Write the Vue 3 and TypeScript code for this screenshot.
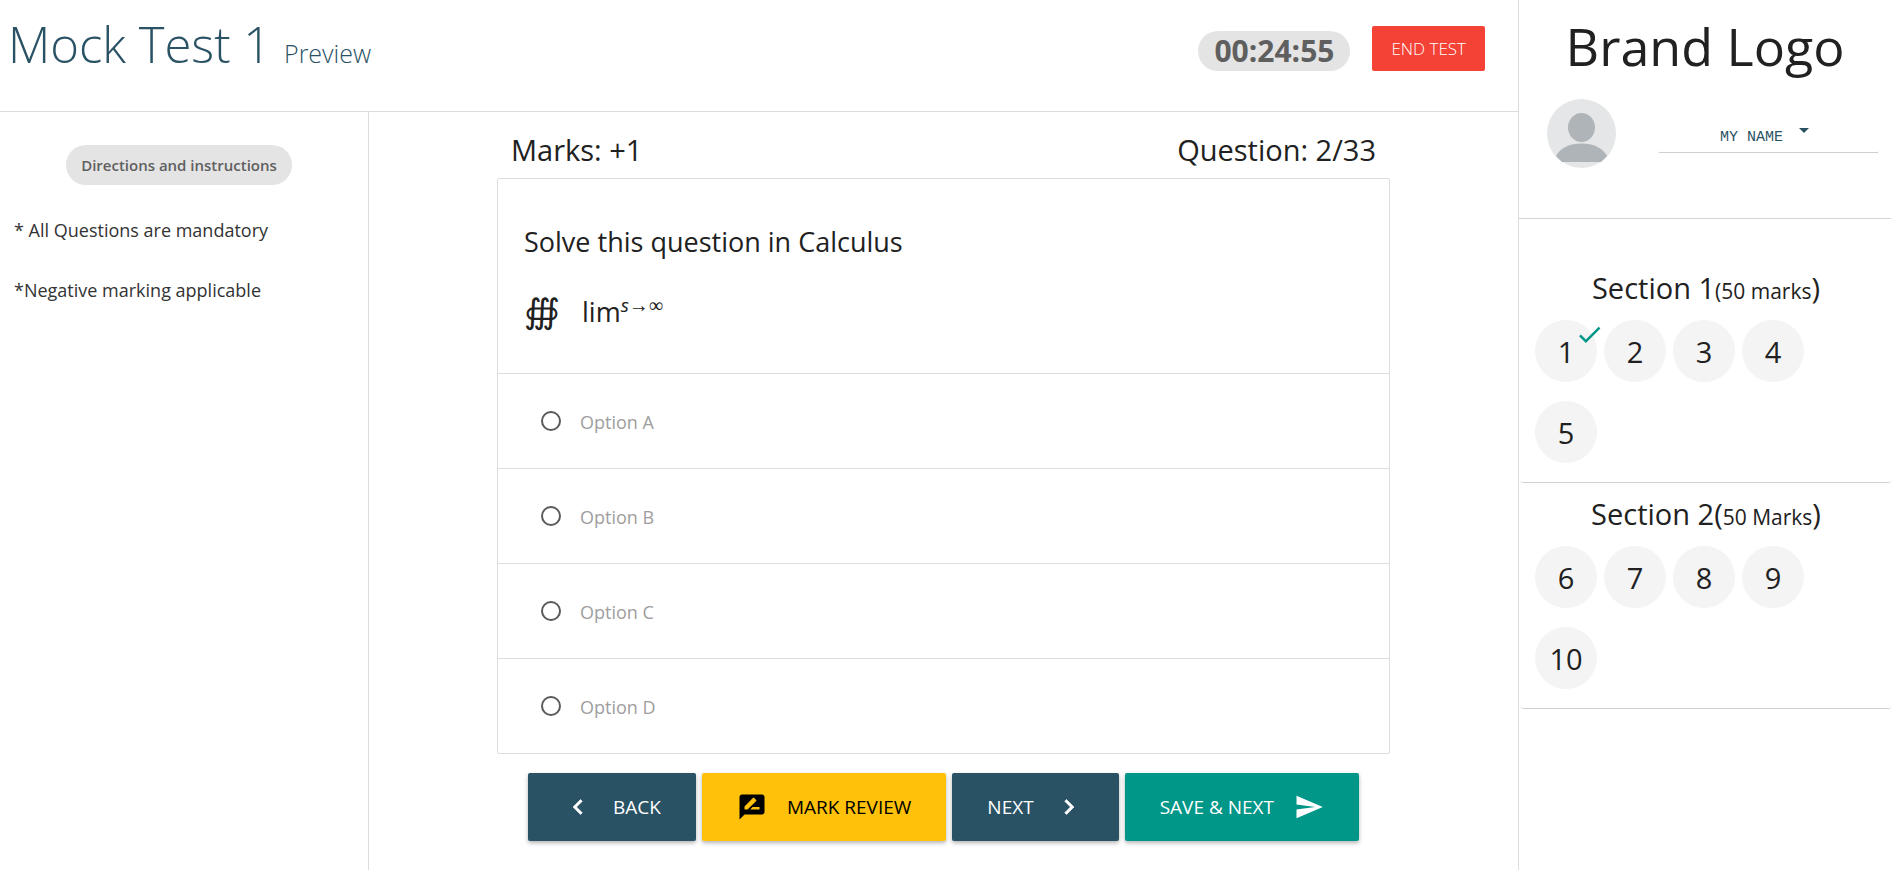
<script setup lang="ts">
import { ref } from 'vue'

interface Section {
  title: string
  note: string
  open: string
  items: number[]
}

const options: string[] = ['Option A', 'Option B', 'Option C', 'Option D']
const answer = ref<string>('')
const answered = ref<number[]>([1])
const directions: string[] = ['* All Questions are mandatory', '*Negative marking applicable']

const sections: Section[] = [
  { title: 'Section 1', open: '', note: '(50 marks', items: [1, 2, 3, 4, 5] },
  { title: 'Section 2', open: '(', note: '50 Marks', items: [6, 7, 8, 9, 10] },
]
</script>

<template>
  <div class="page">
    <div class="work">
      <header class="topbar">
        <h1 class="title">Mock Test 1 <small>Preview</small></h1>
        <div class="status">
          <span class="chip timer">00:24:55</span>
          <button type="button" class="end">END TEST</button>
        </div>
      </header>

      <div class="columns">
        <aside class="directions">
          <span class="chip heading">Directions and instructions</span>
          <p v-for="line in directions" :key="line">{{ line }}</p>
        </aside>

        <main class="question">
          <div class="meta">
            <span>Marks: +1</span>
            <span>Question: 2/33</span>
          </div>

          <div class="card">
            <div class="prompt">
              <p>Solve this question in Calculus</p>
              <p class="formula"><span class="integral">∰</span><span>lim<sup><i>s</i><span class="symbols">→∞</span></sup></span></p>
            </div>
            <label v-for="option in options" :key="option" class="option">
              <input v-model="answer" type="radio" name="answer" :value="option" />
              <span>{{ option }}</span>
            </label>
          </div>

          <div class="actions">
            <button type="button" class="navy">
              <svg class="chevron" viewBox="0 0 24 24" aria-hidden="true"><path d="M15.41 7.41 14 6l-6 6 6 6 1.41-1.41L10.83 12z" /></svg>
              <span>BACK</span>
            </button>
            <button type="button" class="amber">
              <svg viewBox="0 0 24 24" aria-hidden="true"><path d="M20 2H4c-1.1 0-1.99.9-1.99 2L2 22l4-4h14c1.1 0 2-.9 2-2V4c0-1.1-.9-2-2-2zM6 14v-2.47l6.88-6.88c.2-.2.51-.2.71 0l1.77 1.77c.2.2.2.51 0 .71L8.47 14H6zm12 0h-7.5l2-2H18v2z" /></svg>
              <span>MARK REVIEW</span>
            </button>
            <button type="button" class="navy">
              <span>NEXT</span>
              <svg class="chevron" viewBox="0 0 24 24" aria-hidden="true"><path d="M10 6 8.59 7.41 13.17 12l-4.58 4.59L10 18l6-6z" /></svg>
            </button>
            <button type="button" class="teal">
              <span>SAVE &amp; NEXT</span>
              <svg viewBox="0 0 24 24" aria-hidden="true"><path d="M2.01 21 23 12 2.01 3 2 10l15 2-15 2z" /></svg>
            </button>
          </div>
        </main>
      </div>
    </div>

    <aside class="sidebar">
      <div class="account">
        <div class="brand">Brand Logo</div>
        <div class="user">
          <svg class="avatar" viewBox="0 0 69 69" aria-hidden="true">
            <circle cx="34.5" cy="34.5" r="34.5" fill="#e4e6e7" />
            <ellipse cx="34.5" cy="28.5" rx="13.5" ry="14.5" fill="#aeb4b7" />
            <path d="M9 57C13 49 23 44.500 34.500 44.500S56 49 60 57L54 63H15z" fill="#aeb4b7" />
          </svg>
          <button type="button" class="menu">
            <span>MY NAME</span>
            <svg viewBox="0 0 10 5" aria-hidden="true"><path d="M0 0h10L5 5z" /></svg>
          </button>
        </div>
      </div>

      <section v-for="section in sections" :key="section.title" class="section">
        <h2>{{ section.title }}{{ section.open }}<small>{{ section.note }}</small>)</h2>
        <div class="numbers">
          <button v-for="n in section.items" :key="n" type="button">
            {{ n }}
            <svg v-if="answered.includes(n)" viewBox="0 0 24 24" aria-label="answered"><path d="M9 16.170 4.830 12l-1.420 1.410L9 19 21 7l-1.410-1.410z" /></svg>
          </button>
        </div>
      </section>
    </aside>
  </div>
</template>

<style>
body {
  margin: 0;
  background: #fff;
}
</style>

<style scoped>
.page {
  display: grid;
  grid-template-columns: minmax(0, 1fr) 373px;
  min-height: 100vh;
  box-sizing: border-box;
  font-family: "Segoe UI", "Open Sans", "Noto Sans", sans-serif;
  color: #212121;
}
.page *,
.page *::before {
  box-sizing: border-box;
}
h1, h2, p {
  margin: 0;
  font-weight: 400;
}
button {
  margin: 0;
  padding: 0;
  border: 0;
  background: none;
  font-family: inherit;
  color: inherit;
  cursor: pointer;
}
svg {
  fill: currentColor;
}
.work {
  display: flex;
  flex-direction: column;
}
.topbar {
  display: flex;
  justify-content: space-between;
  align-items: flex-start;
  min-height: 112px;
  padding: 0 33px 0 8px;
  border-bottom: 1px solid #dcdcdc;
}
.title {
  padding-top: 9px;
  font-size: 49px;
  line-height: 70px;
  font-weight: 300;
  color: #2a5265;
}
.title small {
  font-size: 25px;
}
.status {
  display: flex;
  align-items: flex-end;
  gap: 22px;
  padding-top: 26px;
}
.chip {
  padding: 0 15px;
  border-radius: 20px;
  background: #e4e4e4;
  line-height: 40px;
  color: #5f5f5f;
}
.timer {
  padding: 0 16px;
  font-size: 30px;
  font-weight: 700;
}
.end {
  padding: 0 19px;
  border-radius: 2px;
  background: #f44336;
  color: #fff;
  font-size: 17px;
  line-height: 45px;
  font-weight: 300;
}
.columns {
  display: flex;
  flex: 1;
}
.directions {
  display: flex;
  flex-direction: column;
  width: 369px;
  flex-shrink: 0;
  padding: 33px 24px 0 14px;
  border-right: 1px solid #dcdcdc;
  font-size: 18px;
  line-height: 30px;
}
.heading {
  align-self: center;
  font-size: 15px;
  font-weight: 600;
}
.directions p {
  margin-top: 30px;
  color: #333;
}
.question {
  flex: 1;
  padding: 0 128px;
}
.meta {
  display: flex;
  justify-content: space-between;
  padding: 20px 14px 10px;
  font-size: 29px;
  line-height: 36px;
}
.card {
  border: 1px solid #dedede;
  border-radius: 2px;
}
.prompt {
  display: flex;
  flex-direction: column;
  gap: 30px;
  padding: 43px 26px 41px;
  font-size: 27px;
  line-height: 40px;
}
.formula {
  display: flex;
  gap: 22px;
}
.integral {
  font-family: "Cambria Math", "Liberation Serif", "DejaVu Serif", serif;
  font-size: 34px;
}
sup {
  font-size: 19px;
  line-height: 0;
}
.symbols {
  font-family: "Cambria Math", "Liberation Serif", serif;
  font-size: 20px;
}
.option {
  display: flex;
  align-items: center;
  gap: 19px;
  height: 95px;
  padding-left: 43px;
  border-top: 1px solid #dedede;
  font-size: 18px;
  line-height: 28px;
  color: #9e9e9e;
}
.option span {
  padding-top: 2px;
}
.option input {
  appearance: none;
  width: 20px;
  height: 20px;
  margin: 0;
  border: 2px solid #5a5a5a;
  border-radius: 50%;
}
.option input:checked {
  background: radial-gradient(#2a5265 50%, transparent 55%);
}
.actions {
  display: flex;
  justify-content: center;
  gap: 6px;
  padding-top: 19px;
}
.actions button {
  display: flex;
  align-items: center;
  gap: 20px;
  height: 68px;
  padding: 0 35px;
  border-radius: 2px;
  box-shadow: 0 2px 4px rgba(0, 0, 0, 0.3);
  font-size: 19px;
  color: #fff;
}
.actions svg {
  width: 30px;
  height: 30px;
}
.actions .chevron {
  stroke: currentColor;
  stroke-width: 0.5;
}
.actions .navy { background: #2a5265; }
.actions .amber { background: #ffc10a; color: #000; }
.actions .teal { background: #009688; }
.sidebar {
  border-left: 1px solid #dcdcdc;
}
.account {
  padding-bottom: 50px;
  border-bottom: 1px solid #d4d4d4;
  margin-bottom: 38px;
}
.brand {
  padding-top: 11px;
  font-size: 52px;
  line-height: 70px;
  text-align: center;
}
.user {
  display: flex;
  align-items: flex-start;
  justify-content: space-between;
  gap: 42px;
  padding: 18px 12px 0 28px;
}
.avatar {
  width: 69px;
  height: 69px;
  flex-shrink: 0;
}
.menu {
  display: flex;
  justify-content: center;
  gap: 16px;
  flex: 1;
  padding: 24px 8px 0 0;
  border-bottom: 1px solid #cfcfcf;
  border-radius: 2px;
  color: #2a5265;
  font-family: "Liberation Mono", monospace;
  font-size: 15px;
  line-height: 29px;
}
.menu svg {
  width: 10px;
  height: 5px;
  margin-top: 5px;
}
.section {
  margin-left: 2px;
  padding: 13px 14px 19px;
  border-bottom: 1px solid #d0d0d0;
  border-radius: 3px;
}
.section h2 {
  margin-bottom: 14px;
  font-size: 29px;
  line-height: 36px;
  text-align: center;
}
.section small {
  font-size: 21px;
  line-height: 0;
}
.numbers {
  display: grid;
  grid-template-columns: repeat(4, 62px);
  gap: 19px 7px;
}
.numbers button {
  position: relative;
  height: 62px;
  border-radius: 50%;
  background: #f4f4f4;
  font-size: 29px;
}
.numbers svg {
  position: absolute;
  top: 0;
  right: -7px;
  width: 29px;
  height: 29px;
  color: #009688;
}
</style>
